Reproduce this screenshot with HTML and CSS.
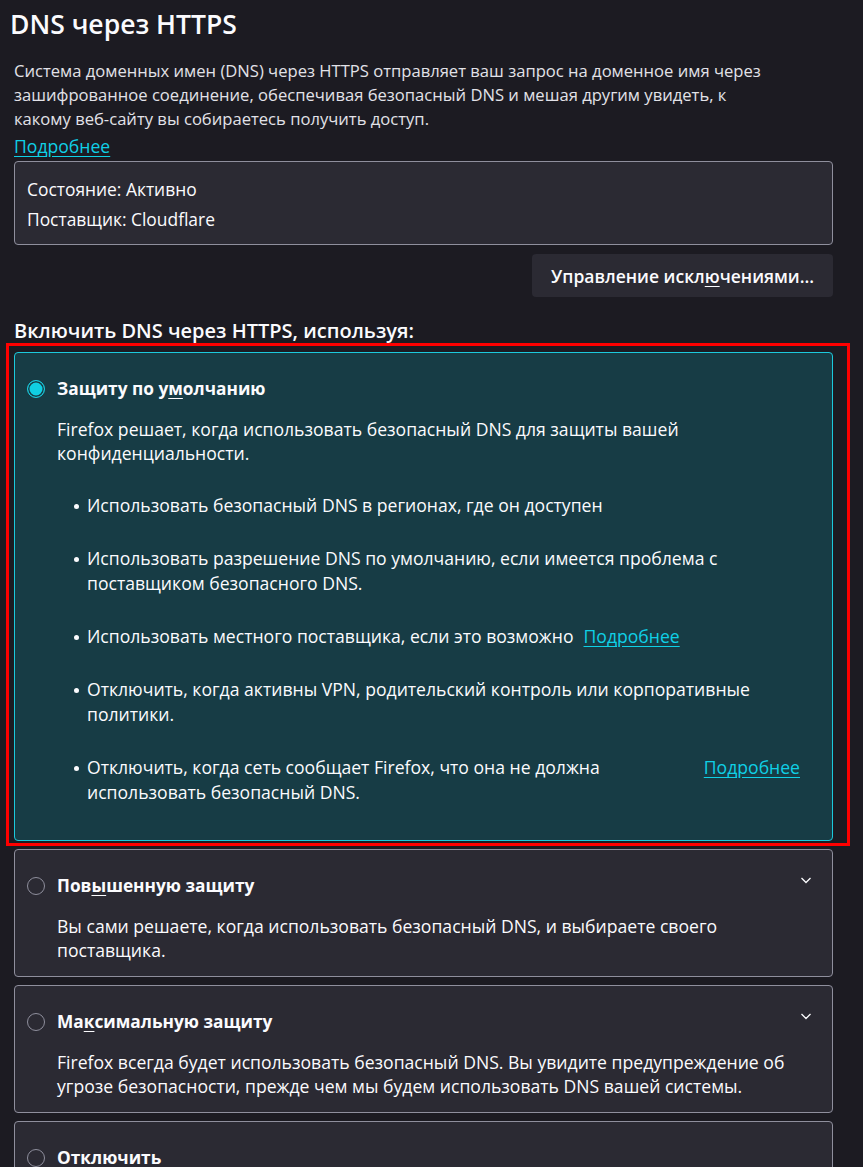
FILE: index.html
```html
<!DOCTYPE html>
<html lang="ru">
<head>
<meta charset="utf-8">
<title>DNS через HTTPS</title>
<link rel="stylesheet" href="styles.css">
</head>
<body>
<main class="page">
  <h1 class="title">DNS через HTTPS</h1>
  <p class="intro">Система доменных имен (DNS) через HTTPS отправляет ваш запрос на доменное имя через зашифрованное соединение, обеспечивая безопасный DNS и мешая другим увидеть, к <span class="nowrap">какому веб-сайту</span> вы собираетесь получить доступ.</p>
  <a class="link more" href="#">Подробнее</a>

  <div class="status">
    <div>Состояние: Активно</div>
    <div>Поставщик: Cloudflare</div>
  </div>

  <div class="actions">
    <button class="btn" type="button">Управление искл<u>ю</u>чениями…</button>
  </div>

  <h2 class="subtitle">Включить DNS через HTTPS, используя:</h2>

  <div class="options">
    <section class="card selected">
      <div class="card-head">
        <span class="radio checked"></span>
        <span class="label">Защиту по у<u>м</u>олчанию</span>
      </div>
      <div class="card-body">
        <p class="card-desc">Firefox решает, когда использовать безопасный DNS для защиты вашей конфиденциальности.</p>
        <ul class="bullets">
          <li><span class="li-row"><span class="li-text">Использовать безопасный DNS в регионах, где он доступен</span></span></li>
          <li><span class="li-row"><span class="li-text">Использовать разрешение DNS по умолчанию, если имеется проблема с поставщиком безопасного DNS.</span></span></li>
          <li><span class="li-row"><span class="li-text">Использовать местного поставщика, если это возможно</span><a class="link li-link" href="#">Подробнее</a></span></li>
          <li><span class="li-row"><span class="li-text">Отключить, когда активны VPN, родительский контроль или корпоративные политики.</span></span></li>
          <li><span class="li-row"><span class="li-text">Отключить, когда сеть сообщает Firefox, что она не должна использовать безопасный DNS.</span><a class="link li-link" href="#">Подробнее</a></span></li>
        </ul>
      </div>
    </section>

    <section class="card">
      <div class="card-head">
        <span class="radio"></span>
        <span class="label">Пов<u>ы</u>шенную защиту</span>
        <svg class="chev" width="12" height="12" viewBox="0 0 12 12" aria-hidden="true"><path d="M1.5 4 L6 8.5 L10.5 4" fill="none" stroke="#fbfbfe" stroke-width="1.3"/></svg>
      </div>
      <div class="card-body">
        <p class="card-desc">Вы сами решаете, когда использовать безопасный DNS, и выбираете своего поставщика.</p>
      </div>
    </section>

    <section class="card">
      <div class="card-head">
        <span class="radio"></span>
        <span class="label">Ма<u>к</u>симальную защиту</span>
        <svg class="chev" width="12" height="12" viewBox="0 0 12 12" aria-hidden="true"><path d="M1.5 4 L6 8.5 L10.5 4" fill="none" stroke="#fbfbfe" stroke-width="1.3"/></svg>
      </div>
      <div class="card-body">
        <p class="card-desc">Firefox всегда будет использовать безопасный DNS. Вы увидите предупреждение об угрозе безопасности, прежде чем мы будем использовать DNS вашей системы.</p>
      </div>
    </section>

    <section class="card">
      <div class="card-head">
        <span class="radio"></span>
        <span class="label">Откл<u>ю</u>чить</span>
      </div>
    </section>
  </div>
</main>
</body>
</html>
```

FILE: styles.css
```css
* { box-sizing: border-box; }
html, body { margin: 0; padding: 0; }
body {
  background: #1c1b22;
  color: #fbfbfe;
  font-family: "Open Sans", "Noto Sans", "DejaVu Sans", sans-serif;
  font-size: 17.6px;
  line-height: 24px;
  overflow: hidden;
  height: 1167px;
}
.page {
  padding: 0 30px 0 14px;
}
.title {
  margin: 4px 0 0 -4px;
  font-size: 26.5px;
  line-height: 40px;
  font-weight: 600;
}
.intro {
  margin: 15px 0 0;
  font-size: 16.6px;
  color: #e2e2e8;
}
.nowrap { white-space: nowrap; }
.link {
  color: #0fd0e6;
  text-decoration: underline;
  text-underline-offset: 3px;
}
.more {
  display: inline-block;
  margin-top: 3px;
}
.status {
  margin-top: 3px;
  background: #2b2a33;
  border: 1px solid #8f8f9d;
  border-radius: 4px;
  padding: 12px 12px 10px;
  line-height: 30px;
  font-size: 17.4px;
}
.actions {
  display: flex;
  justify-content: flex-end;
  margin-top: 9px;
}
.btn {
  font: inherit;
  font-size: 17.5px;
  font-weight: 600;
  color: #fbfbfe;
  background: #2b2a33;
  border: none;
  border-radius: 4px;
  height: 43px;
  padding: 0 19px;
}
.btn u, .label u { text-underline-offset: 3px; }
.subtitle {
  margin: 21px 0 0;
  font-size: 20px;
  line-height: 26px;
  font-weight: 600;
}
.options {
  margin-top: 8px;
  display: flex;
  flex-direction: column;
  gap: 8px;
}
.card {
  background: #2b2a33;
  border: 1px solid #8f8f9d;
  border-radius: 4px;
  padding: 23px 32px 14px 12px;
}
.card.selected {
  position: relative;
  background: #173c45;
  border-color: #1cc9dc;
}
.card.selected::after {
  content: "";
  position: absolute;
  top: -10px;
  left: -9px;
  right: -18px;
  bottom: -6px;
  border: 3px solid #ff0000;
  pointer-events: none;
}
.card-head {
  display: flex;
  align-items: center;
  gap: 12px;
  margin-right: -12px;
}
.radio {
  flex: none;
  width: 18px;
  height: 18px;
  border-radius: 50%;
  border: 1px solid #8f8f9d;
  background: #2b2a33;
}
.radio.checked {
  border-color: #1cc9dc;
  background: #10cfe3;
  box-shadow: inset 0 0 0 1.5px #173c45;
}
.label {
  flex: 1;
  font-size: 17.3px;
  font-weight: 700;
  line-height: 26px;
}
.chev {
  flex: none;
  align-self: flex-start;
  margin-top: 1px;
}
.card-body {
  padding-left: 30px;
}
.card-desc {
  margin: 15px 0 0;
}
.bullets {
  list-style: none;
  margin: 28px 0 21px;
  padding: 0 0 0 30px;
  display: flex;
  flex-direction: column;
  gap: 28px;
  line-height: 25px;
}
.bullets li {
  display: flex;
}
.bullets li::before {
  content: "";
  flex: none;
  width: 5px;
  height: 5px;
  border-radius: 50%;
  background: #fbfbfe;
  margin: 11px 8px 0 -13px;
}
.li-row {
  display: flex;
  gap: 10px;
  align-items: flex-start;
}
.li-text { flex: 0 1 auto; }
.li-link { flex: none; }
```
